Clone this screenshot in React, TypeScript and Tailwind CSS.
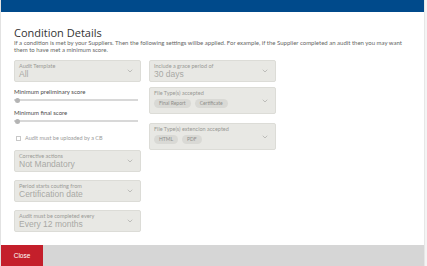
import { ChevronDown } from "lucide-react";

const Select = ({
  label,
  value,
  chips,
}: {
  label: string;
  value?: string;
  chips?: string[];
}) => (
  <div className="relative w-[127px] bg-[#e8e8e4] border border-[#dcdcd7] rounded-[2px] px-[4px] pt-[1px] pb-[2px]">
    <div className="text-[5.5px] leading-[8px] text-[#9a9a96] font-['Lato',sans-serif]">
      {label}
    </div>
    {value && (
      <div className="text-[8.5px] leading-[9px] text-[#a9a9a5] font-['Liberation_Sans',sans-serif]">
        {value}
      </div>
    )}
    {chips && (
      <div className="flex gap-[4px] mt-[2px] mb-[3px]">
        {chips.map((c) => (
          <span
            key={c}
            className="bg-[#d9d9d5] rounded-full px-[5px] h-[9px] leading-[9px] text-[5px] text-[#8e8e8a] font-['Lato',sans-serif]"
          >
            {c}
          </span>
        ))}
      </div>
    )}
    <ChevronDown
      className="absolute right-[6px] top-1/2 -translate-y-1/2 w-[8px] h-[8px] text-[#a8a8a4]"
      strokeWidth={2}
    />
  </div>
);

const Slider = ({ label }: { label: string }) => (
  <div className="w-[127px]">
    <div className="text-[6px] leading-[8px] text-[#4a4a4a] font-['Lato',sans-serif]">
      {label}
    </div>
    <div className="relative h-[8px] flex items-center">
      <div className="w-[124px] h-[1.5px] bg-[#d8d8d8]" />
      <div className="absolute left-[1px] w-[5px] h-[5px] rounded-full bg-[#b4b4b4]" />
    </div>
  </div>
);

export default function App() {
  return (
    <div className="w-[427px] h-[266px] bg-white flex overflow-hidden">
      <div className="w-[424px] h-full flex flex-col border-l border-[#e2e2e2]">
        <div className="h-[12px] bg-[#004a8b]" />
        <div className="flex-1 px-[13px] pt-[14px]">
          <h1 className="text-[11px] leading-[13px] text-[#333] font-['Open_Sans',sans-serif] font-medium">
            Condition Details
          </h1>
          <p className="text-[6px] leading-[7px] text-[#666] font-['Lato',sans-serif]">
            If a condition is met by your Suppliers. Then the following settings willbe applied. For example, if the Supplier completed an audit then you may want them to have met a minimum score.
          </p>
          <div className="flex gap-[8px] mt-[7px]">
            <div className="flex flex-col">
              <Select label="Audit Template" value="All" />
              <div className="mt-[6px] flex flex-col gap-[5px]">
                <Slider label="Minimum preliminary score" />
                <Slider label="Minimum final score" />
              </div>
              <label className="flex items-center gap-[4px] mt-[9px] ml-[2px]">
                <span className="w-[5px] h-[5px] border border-[#c8c8c8] bg-white" />
                <span className="text-[5.5px] text-[#9a9a9a] font-['Lato',sans-serif]">
                  Audit must be uploaded by a CB
                </span>
              </label>
              <div className="mt-[8px] flex flex-col gap-[8px]">
                <Select label="Corrective actions" value="Not Mandatory" />
                <Select label="Period starts couting from" value="Certification date" />
                <Select label="Audit must be completed every" value="Every 12 months" />
              </div>
            </div>
            <div className="flex flex-col">
              <Select label="Include a grace period of" value="30 days" />
              <div className="mt-[5px]">
                <Select label="File Type(s) accepted" chips={["Final Report", "Certificate"]} />
              </div>
              <div className="mt-[9px]">
                <Select label="File Type(s) extencion accepted" chips={["HTML", "PDF"]} />
              </div>
            </div>
          </div>
        </div>
        <div className="h-[21px] bg-[#d6d6d6] flex">
          <button className="w-[42px] h-full bg-[#c41f2b] text-white text-[6.5px] font-['Liberation_Sans',sans-serif]">
            Close
          </button>
        </div>
      </div>
      <div className="w-[3px] h-full bg-[#f4f4f4] border-l border-[#e6e6e6]" />
    </div>
  );
}
